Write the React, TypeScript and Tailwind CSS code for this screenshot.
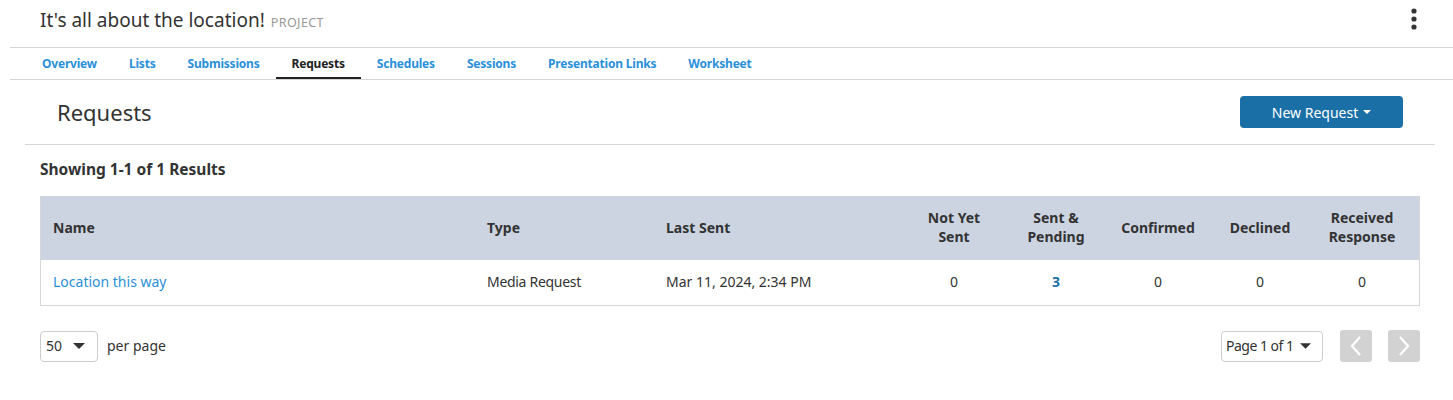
import React from "react";

const font = { fontFamily: '"Noto Sans", "Open Sans", Arial, sans-serif' };

function Kebab() {
  return (
    <svg width="8" height="22" viewBox="0 0 8 22" className="block">
      <circle cx="4" cy="3" r="2.6" fill="#333" />
      <circle cx="4" cy="11" r="2.6" fill="#333" />
      <circle cx="4" cy="19" r="2.6" fill="#333" />
    </svg>
  );
}

function Caret({ color = "#333", w = 12, h = 6 }: { color?: string; w?: number; h?: number }) {
  return (
    <svg width={w} height={h} viewBox="0 0 12 6" className="block">
      <path d="M0 0 L12 0 L6 6 Z" fill={color} />
    </svg>
  );
}

const tabs = ["Overview", "Lists", "Submissions", "Requests", "Schedules", "Sessions", "Presentation Links", "Worksheet"];

export default function App() {
  return (
    <div className="w-[1453px] h-[400px] bg-white text-[#333] overflow-hidden" style={font}>
      {/* Header */}
      <div className="h-[47px] flex items-start pl-[40px] pr-[35px]">
        <div className="flex items-baseline gap-[6px] pt-[7px]">
          <span className="text-[19px] text-[#333] leading-[26px]">It's all about the location!</span>
          <span className="text-[12.5px] text-[#999] tracking-[0.4px]">PROJECT</span>
        </div>
        <div className="ml-auto pt-[8px]">
          <Kebab />
        </div>
      </div>
      {/* Tabs */}
      <div className="ml-[10px] border-t border-b border-[#d6d6d6] h-[33px] flex items-stretch pl-[16px]">
        {tabs.map((t) => (
          <div
            key={t}
            className={
              "px-[16px] flex items-center text-[12px] font-bold tracking-[-0.2px] pt-[2px] " +
              (t === "Requests"
                ? "text-[#222] border-b-2 border-[#222]"
                : "text-[#2a90d8] border-b-2 border-transparent")
            }
          >
            {t}
          </div>
        ))}
      </div>
      {/* Page heading */}
      <div className="mx-[25px] mr-[18px] h-[65px] flex items-center border-b border-[#d6d6d6] pl-[32px] pr-[32px]">
        <h1 className="text-[22px] text-[#333]">Requests</h1>
        <button className="ml-auto w-[163px] h-[32px] rounded-[4px] bg-[#1b6fa7] text-white text-[14px] flex items-center justify-center gap-[5px]">
          New Request
          <Caret color="#fff" w={8} h={4} />
        </button>
      </div>
      {/* Results */}
      <div className="px-[40px] pr-[33px]">
        <div className="h-[51px] flex items-center text-[15.5px] font-bold text-[#333] pb-[2px]">
          Showing 1-1 of 1 Results
        </div>
        <div className="border border-[#d6d6d6] border-t-0">
          <div className="bg-[#ccd4e1] h-[64px] flex items-center text-[14px] font-bold text-[#333] pb-[2px]">
            <div className="w-[434px] pl-[12px]">Name</div>
            <div className="w-[179px] pl-[12px]">Type</div>
            <div className="w-[249px] pl-[12px]">Last Sent</div>
            <div className="w-[102px] text-center leading-[19px]">Not Yet<br />Sent</div>
            <div className="w-[102px] text-center leading-[19px]">Sent &amp;<br />Pending</div>
            <div className="w-[102px] text-center leading-[19px]">Confirmed</div>
            <div className="w-[102px] text-center leading-[19px]">Declined</div>
            <div className="w-[102px] text-center leading-[19px]">Received<br />Response</div>
          </div>
          <div className="h-[45px] flex items-center text-[14px] text-[#333] pb-[3px]">
            <div className="w-[434px] pl-[12px] text-[#2a90d8]">Location this way</div>
            <div className="w-[179px] pl-[12px] tracking-[-0.3px]">Media Request</div>
            <div className="w-[249px] pl-[12px]">Mar 11, 2024, 2:34 PM</div>
            <div className="w-[102px] text-center">0</div>
            <div className="w-[102px] text-center text-[#1b6fa7] font-bold">3</div>
            <div className="w-[102px] text-center">0</div>
            <div className="w-[102px] text-center">0</div>
            <div className="w-[102px] text-center">0</div>
          </div>
        </div>
        {/* Pagination */}
        <div className="mt-[24px] flex items-center">
          <div className="w-[58px] h-[31px] border border-[#ccc] rounded-[4px] flex items-center pl-[5px] pr-[12px] text-[14px] pb-[2px]">
            <span>50</span>
            <span className="ml-auto pt-[2px]"><Caret w={12} h={6} /></span>
          </div>
          <span className="ml-[9px] text-[14px] text-[#333] pb-[2px]">per page</span>
          <div className="ml-auto flex items-center">
            <div className="w-[102px] h-[31px] border border-[#ccc] rounded-[4px] flex items-center pl-[4px] pr-[11px] text-[14px] tracking-[-0.5px] pb-[2px]">
              <span>Page 1 of 1</span>
              <span className="ml-auto pt-[2px]"><Caret w={11} h={6} /></span>
            </div>
            <div className="ml-[17px] w-[32px] h-[32px] rounded-[3px] bg-[#d2d2d2] flex items-center justify-center">
              <svg width="14" height="22" viewBox="0 0 14 22"><path d="M11 2 L3 11 L11 20" stroke="#fff" strokeWidth="2.2" fill="none" /></svg>
            </div>
            <div className="ml-[16px] w-[32px] h-[32px] rounded-[3px] bg-[#d2d2d2] flex items-center justify-center">
              <svg width="14" height="22" viewBox="0 0 14 22"><path d="M3 2 L11 11 L3 20" stroke="#fff" strokeWidth="2.2" fill="none" /></svg>
            </div>
          </div>
        </div>
      </div>
    </div>
  );
}
